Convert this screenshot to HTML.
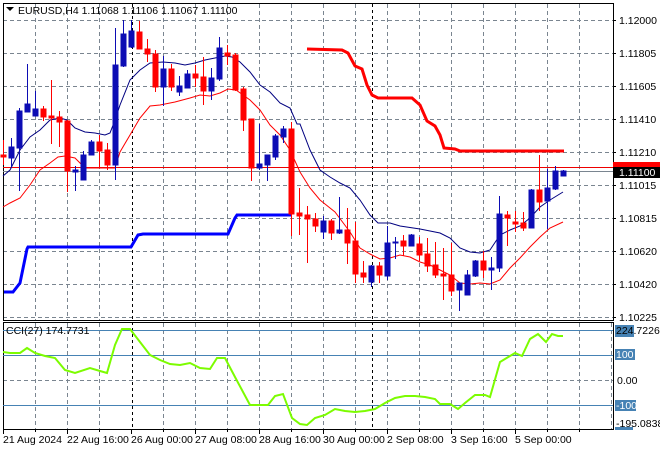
<!DOCTYPE html>
<html><head><meta charset="utf-8"><style>
html,body{margin:0;padding:0;background:#fff}
svg{display:block}
text{font-family:"Liberation Sans",sans-serif;font-size:10.5px;fill:#000}
</style></head><body>
<svg width="660" height="450" viewBox="0 0 660 450" xmlns="http://www.w3.org/2000/svg">
<rect width="660" height="450" fill="#fff"/>
<!-- grid main -->
<g stroke="#7a8590" stroke-width="1" stroke-dasharray="4,3" fill="none">
<path d="M3 20.5H613M3 53.5H613M3 86.5H613M3 119.5H613M3 152.5H613M3 185.5H613M3 218.5H613M3 251.5H613M3 284.5H613M3 317.5H613"/>
<path d="M35.5 4V320M67.5 4V320M99.5 4V320M163.5 4V320M195.5 4V320M227.5 4V320M259.5 4V320M291.5 4V320M323.5 4V320M355.5 4V320M387.5 4V320M419.5 4V320M451.5 4V320M483.5 4V320M515.5 4V320M547.5 4V320M579.5 4V320"/>
<path d="M35.5 323V429M67.5 323V429M99.5 323V429M163.5 323V429M195.5 323V429M227.5 323V429M259.5 323V429M291.5 323V429M323.5 323V429M355.5 323V429M387.5 323V429M419.5 323V429M451.5 323V429M483.5 323V429M515.5 323V429M547.5 323V429M579.5 323V429M611.5 323V429"/>
<path d="M3 380.5H613"/>
</g>
<g stroke="#000" stroke-width="1" stroke-dasharray="3,3">
<path d="M132.5 4V429M372.5 4V429"/>
</g>
<!-- frames -->
<rect x="3.5" y="3.5" width="610" height="317" fill="none" stroke="#000"/>
<rect x="3.5" y="322.5" width="610" height="107" fill="none" stroke="#000"/>
<!-- price lines -->
<path d="M3 167.5H613" stroke="#e00" stroke-width="1"/>
<path d="M3 171.5H613" stroke="#7a8590" stroke-width="1"/>
<!-- thick lines -->
<polyline fill="none" stroke="#0000ff" stroke-width="3" points="4,292 13,292 20,283 27,249 28,247 131,247 138,235 143,234 228,234 235,218 237,215 291,215"/>
<polyline fill="none" stroke="#f00" stroke-width="3" points="307,49 342,50 348,53 355,66 362,69 367,85 372,95 378,98 412,98 420,105 427,121 435,126 440,135 444,148 455,149 460,151 564,151"/>
<!-- thin MA lines -->
<polyline fill="none" stroke="#000080" stroke-width="1" points="3,176 10,170 20,150 30,137 40,130 50,120 60,118 67,120 75,128 85,132 95,133 105,135 110,133 115,120 120,105 130,80 140,70 150,63 163,62 175,63 185,65 195,63 205,60 215,58 225,56 232,57 240,62 250,72 260,85 270,92 280,103 290,108 297,124 300,124 310,150 320,170 330,177 340,183 350,188 360,200 370,215 378,223 390,223 400,226 420,229 440,233 450,238 460,248 470,252 480,253 490,250 500,235 510,230 520,226 530,218 540,207 550,200 563,192"/>
<polyline fill="none" stroke="#f00" stroke-width="1" points="3,207 10,203 20,198 30,185 40,170 50,163 58,157 65,156 75,158 85,168 100,168 115,168 120,152 130,135 140,118 150,106 160,105 175,102 190,98 200,95 210,96 220,93 228,89 236,90 250,100 260,110 270,125 280,135 290,150 300,172 310,188 320,200 335,212 350,232 360,248 370,254 380,259 390,258 400,255 410,257 420,262 430,265 440,270 450,275 460,283 470,284 480,283 490,284 500,280 510,268 520,258 530,247 540,237 550,228 563,222"/>
<!-- candles -->
<g id="c" shape-rendering="crispEdges">
<script>/*noop*/</script>
</g>
<g shape-rendering="crispEdges">
<!-- x, bTop, bBot, wTop, wBot -->
<g stroke="#f00" fill="#f00">
<path d="M3.5 140V165" /><rect x="1" y="155" width="5" height="2"/>
<path d="M43.5 106V121"/><rect x="41" y="109" width="5" height="8"/>
<path d="M51.5 80V144"/><rect x="49" y="116" width="5" height="2"/>
<path d="M59.5 111V147"/><rect x="57" y="117" width="5" height="5"/>
<path d="M67.5 120V192"/><rect x="65" y="121" width="5" height="50"/>
<path d="M99.5 135V168"/><rect x="97" y="142" width="5" height="9"/>
<path d="M107.5 143V170"/><rect x="105" y="150" width="5" height="15"/>
<path d="M139.5 21V49"/><rect x="137" y="32" width="5" height="17"/>
<path d="M147.5 39V62"/><rect x="145" y="49" width="5" height="5"/>
<path d="M155.5 50V92"/><rect x="153" y="54" width="5" height="33"/>
<path d="M171.5 64V91"/><rect x="169" y="69" width="5" height="18"/>
<path d="M195.5 65V87"/><rect x="193" y="74" width="5" height="4"/>
<path d="M203.5 57V105"/><rect x="201" y="77" width="5" height="14"/>
<path d="M227.5 45V65"/><rect x="225" y="53" width="5" height="3"/>
<path d="M235.5 53V91"/><rect x="233" y="55" width="5" height="35"/>
<path d="M243.5 87V131"/><rect x="241" y="89" width="5" height="31"/>
<path d="M251.5 119V181"/><rect x="249" y="119" width="5" height="49"/>
<path d="M291.5 122V236"/><rect x="289" y="129" width="5" height="85"/>
<path d="M299.5 188V235"/><rect x="297" y="213" width="5" height="3"/>
<path d="M307.5 206V263"/><rect x="305" y="215" width="5" height="4"/>
<path d="M315.5 213V232"/><rect x="313" y="219" width="5" height="7"/>
<path d="M331.5 219V240"/><rect x="329" y="221" width="5" height="12"/>
<path d="M347.5 208V264"/><rect x="345" y="230" width="5" height="13"/>
<path d="M355.5 222V283"/><rect x="353" y="241" width="5" height="33"/>
<path d="M363.5 261V283"/><rect x="361" y="273" width="5" height="4"/>
<path d="M379.5 262V283"/><rect x="377" y="266" width="5" height="9"/>
<path d="M403.5 235V256"/><rect x="401" y="241" width="5" height="5"/>
<path d="M419.5 237V261"/><rect x="417" y="244" width="5" height="11"/>
<path d="M427.5 238V272"/><rect x="425" y="254" width="5" height="12"/>
<path d="M435.5 242V278"/><rect x="433" y="265" width="5" height="10"/>
<path d="M443.5 248V300"/><rect x="441" y="274" width="5" height="2"/>
<path d="M451.5 243V296"/><rect x="449" y="275" width="5" height="16"/>
<path d="M483.5 251V278"/><rect x="481" y="261" width="5" height="9"/>
<path d="M507.5 211V246"/><rect x="505" y="215" width="5" height="3"/>
<path d="M515.5 211V232"/><rect x="513" y="222" width="5" height="2"/>
<path d="M523.5 212V231"/><rect x="521" y="223" width="5" height="5"/>
<path d="M539.5 155V211"/><rect x="537" y="190" width="5" height="12"/>
</g>
<g stroke="#0c0cb4" fill="#0c0cb4">
<path d="M11.5 138V168"/><rect x="9" y="147" width="5" height="11"/>
<path d="M19.5 108V191"/><rect x="17" y="111" width="5" height="37"/>
<path d="M27.5 64V112"/><rect x="25" y="104" width="5" height="8"/>
<path d="M35.5 91V116"/><rect x="33" y="109" width="5" height="7"/>
<path d="M75.5 166V191"/><rect x="73" y="170" width="5" height="2"/>
<path d="M83.5 151V180"/><rect x="81" y="155" width="5" height="25"/>
<path d="M91.5 140V155"/><rect x="89" y="142" width="5" height="13"/>
<path d="M115.5 28V180"/><rect x="113" y="65" width="5" height="100"/>
<path d="M123.5 20V67"/><rect x="121" y="34" width="5" height="32"/>
<path d="M131.5 20V48"/><rect x="129" y="31" width="5" height="16"/>
<path d="M163.5 56V106"/><rect x="161" y="69" width="5" height="18"/>
<path d="M179.5 76V96"/><rect x="177" y="86" width="5" height="6"/>
<path d="M187.5 70V88"/><rect x="185" y="74" width="5" height="14"/>
<path d="M211.5 68V100"/><rect x="209" y="78" width="5" height="13"/>
<path d="M219.5 37V81"/><rect x="217" y="48" width="5" height="31"/>
<path d="M259.5 124V170"/><rect x="257" y="164" width="5" height="4"/>
<path d="M267.5 155V181"/><rect x="265" y="155" width="5" height="10"/>
<path d="M275.5 134V160"/><rect x="273" y="136" width="5" height="21"/>
<path d="M283.5 126V143"/><rect x="281" y="129" width="5" height="8"/>
<path d="M323.5 216V239"/><rect x="321" y="221" width="5" height="11"/>
<path d="M339.5 197V234"/><rect x="337" y="230" width="5" height="3"/>
<path d="M371.5 265V287"/><rect x="369" y="266" width="5" height="16"/>
<path d="M387.5 226V280"/><rect x="385" y="243" width="5" height="33"/>
<path d="M395.5 237V259"/><rect x="393" y="242" width="5" height="1"/>
<path d="M411.5 234V246"/><rect x="409" y="235" width="5" height="11"/>
<path d="M459.5 283V311"/><rect x="457" y="283" width="5" height="7"/>
<path d="M467.5 270V295"/><rect x="465" y="275" width="5" height="20"/>
<path d="M475.5 260V277"/><rect x="473" y="261" width="5" height="15"/>
<path d="M491.5 257V290"/><rect x="489" y="268" width="5" height="2"/>
<path d="M499.5 196V272"/><rect x="497" y="214" width="5" height="54"/>
<path d="M531.5 189V228"/><rect x="529" y="190" width="5" height="38"/>
<path d="M547.5 169V229"/><rect x="545" y="188" width="5" height="13"/>
<path d="M555.5 166V190"/><rect x="553" y="171" width="5" height="18"/>
<path d="M563.5 170V176"/><rect x="561" y="171" width="5" height="5"/>
</g>
</g>
<!-- header -->
<path d="M6 7H14L10 11Z" fill="#000"/>
<text x="18" y="14">EURUSD,H4  1.11068 1.11106 1.11067 1.11100</text>
<!-- price axis -->
<g>
<text x="619" y="24">1.12000</text>
<text x="619" y="57">1.11805</text>
<text x="619" y="90">1.11605</text>
<text x="619" y="123">1.11410</text>
<text x="619" y="156">1.11210</text>
<text x="619" y="189">1.11015</text>
<text x="619" y="222">1.10815</text>
<text x="619" y="255">1.10620</text>
<text x="619" y="288">1.10420</text>
<text x="619" y="321">1.10225</text>
<rect x="613" y="162" width="47" height="6" fill="#f00"/>
<rect x="613" y="167" width="47" height="11" fill="#000"/>
<text x="619" y="176" style="fill:#fff">1.11100</text>
</g>
<g stroke="#000"><path d="M613 20.5h3M613 53.5h3M613 86.5h3M613 119.5h3M613 152.5h3M613 185.5h3M613 218.5h3M613 251.5h3M613 284.5h3M613 317.5h3"/></g>
<!-- CCI -->
<g stroke="#4682b4" stroke-width="1"><path d="M3 330.5H613M3 355.5H613M3 405.5H613"/></g>
<polyline fill="none" stroke="#7cfc00" stroke-width="2" points="3,352 10,353 20,353 27,348 35,353 45,356 55,358 65,370 75,373 90,368 100,371 107,373 115,345 122,329 130,329 140,342 150,355 160,360 170,364 180,365 190,363 200,368 210,369 217,358 225,358 235,377 250,405 260,405 268,405 275,396 283,394 292,418 300,424 307,425 315,418 325,415 335,409 345,411 355,412 365,411 375,409 385,403 395,398 405,396 415,396 425,397 435,399 440,404 450,404 458,409 465,403 475,395 485,395 490,397 500,362 510,356 515,353 522,356 530,339 538,334 546,342 552,334 558,336 563,336"/>
<text x="6" y="334">CCI(27) 174.7731</text>
<rect x="615" y="325" width="19" height="12" fill="#4682b4"/>
<text x="616" y="334">224.7226</text>
<rect x="615" y="349" width="20" height="11" fill="#4682b4"/>
<text x="616" y="358" style="fill:#fff">100</text>
<text x="617" y="384">0.00</text>
<rect x="615" y="400" width="21" height="11" fill="#4682b4"/>
<text x="616" y="409" style="fill:#fff">-100</text>
<rect x="615" y="427" width="18" height="3" fill="#4682b4"/>
<text x="616" y="427">-195.0838</text>
<!-- time axis -->
<g stroke="#000"><path d="M3.5 429v5M67.5 429v5M131.5 429v5M195.5 429v5M259.5 429v5M323.5 429v5M387.5 429v5M451.5 429v5M515.5 429v5M35.5 429v3M99.5 429v3M163.5 429v3M227.5 429v3M291.5 429v3M355.5 429v3M419.5 429v3M483.5 429v3M547.5 429v3M579.5 429v3"/></g>
<text x="3" y="443">21 Aug 2024</text>
<text x="67" y="443">22 Aug 16:00</text>
<text x="131" y="443">26 Aug 00:00</text>
<text x="195" y="443">27 Aug 08:00</text>
<text x="259" y="443">28 Aug 16:00</text>
<text x="323" y="443">30 Aug 00:00</text>
<text x="387" y="443">2 Sep 08:00</text>
<text x="451" y="443">3 Sep 16:00</text>
<text x="515" y="443">5 Sep 00:00</text>
</svg>
</body></html>
